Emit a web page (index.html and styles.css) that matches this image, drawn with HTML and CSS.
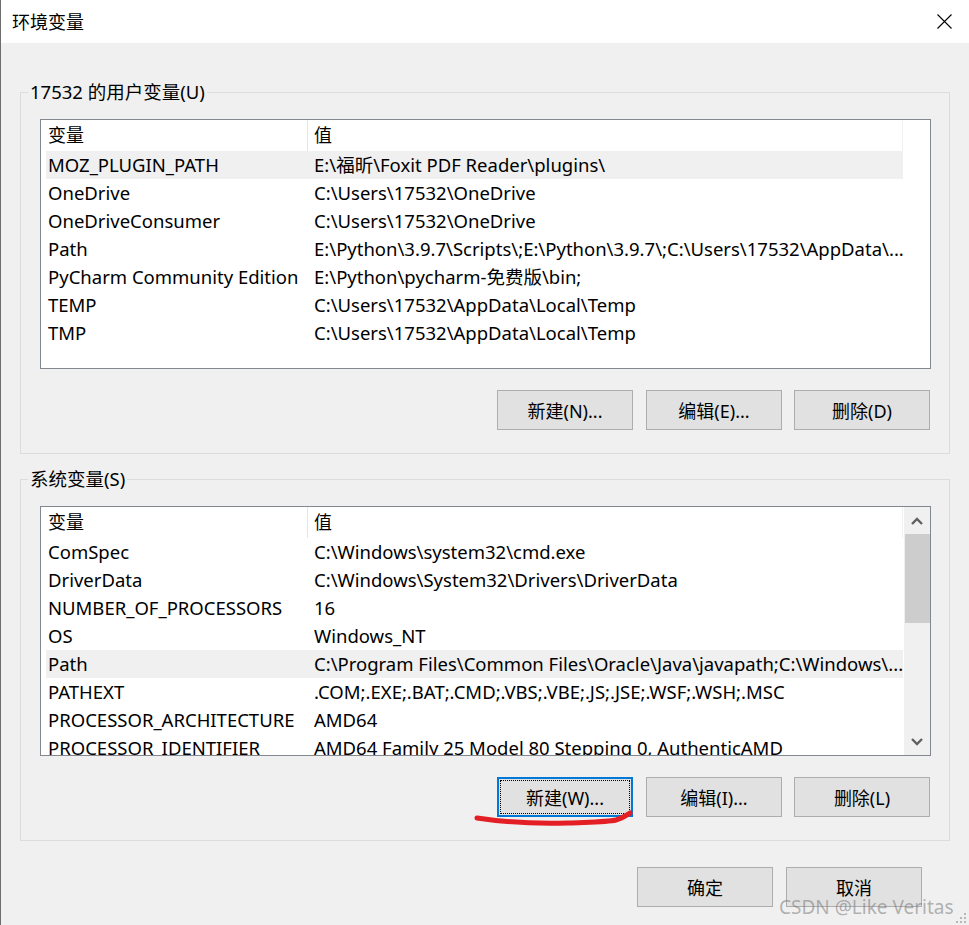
FILE: index.html
```html
<!DOCTYPE html>
<html lang="zh-CN">
<head>
<meta charset="utf-8">
<title>环境变量</title>
<link rel="stylesheet" href="styles.css">
</head>
<body>
<div class="window">
  <header class="titlebar">
    <span class="title">环境变量</span>
    <svg class="close" width="15" height="15" viewBox="0 0 15 15"><path d="M0.5 0.5 L14.5 14.5 M14.5 0.5 L0.5 14.5" stroke="#000" stroke-width="1.1" fill="none"/></svg>
  </header>

  <fieldset class="group group-user">
    <legend>17532 的用户变量(U)</legend>
    <div class="list">
      <div class="list-body">
        <div class="row head"><div class="c1">变量</div><div class="c2">值</div></div>
        <div class="row sel"><div class="c1">MOZ_PLUGIN_PATH</div><div class="c2">E:\福昕\Foxit PDF Reader\plugins\</div></div>
        <div class="row"><div class="c1">OneDrive</div><div class="c2">C:\Users\17532\OneDrive</div></div>
        <div class="row"><div class="c1">OneDriveConsumer</div><div class="c2">C:\Users\17532\OneDrive</div></div>
        <div class="row"><div class="c1">Path</div><div class="c2">E:\Python\3.9.7\Scripts\;E:\Python\3.9.7\;C:\Users\17532\AppData\...</div></div>
        <div class="row"><div class="c1">PyCharm Community Edition</div><div class="c2">E:\Python\pycharm-免费版\bin;</div></div>
        <div class="row"><div class="c1">TEMP</div><div class="c2">C:\Users\17532\AppData\Local\Temp</div></div>
        <div class="row"><div class="c1">TMP</div><div class="c2">C:\Users\17532\AppData\Local\Temp</div></div>
      </div>
    </div>
    <div class="btns">
      <button class="btn">新建(N)...</button>
      <button class="btn">编辑(E)...</button>
      <button class="btn">删除(D)</button>
    </div>
  </fieldset>

  <fieldset class="group group-sys">
    <legend>系统变量(S)</legend>
    <div class="list">
      <div class="list-body">
        <div class="row head"><div class="c1">变量</div><div class="c2">值</div></div>
        <div class="row"><div class="c1">ComSpec</div><div class="c2">C:\Windows\system32\cmd.exe</div></div>
        <div class="row"><div class="c1">DriverData</div><div class="c2">C:\Windows\System32\Drivers\DriverData</div></div>
        <div class="row"><div class="c1">NUMBER_OF_PROCESSORS</div><div class="c2">16</div></div>
        <div class="row"><div class="c1">OS</div><div class="c2">Windows_NT</div></div>
        <div class="row sel"><div class="c1">Path</div><div class="c2">C:\Program Files\Common Files\Oracle\Java\javapath;C:\Windows\...</div></div>
        <div class="row"><div class="c1">PATHEXT</div><div class="c2">.COM;.EXE;.BAT;.CMD;.VBS;.VBE;.JS;.JSE;.WSF;.WSH;.MSC</div></div>
        <div class="row"><div class="c1">PROCESSOR_ARCHITECTURE</div><div class="c2">AMD64</div></div>
        <div class="row"><div class="c1">PROCESSOR_IDENTIFIER</div><div class="c2">AMD64 Family 25 Model 80 Stepping 0, AuthenticAMD</div></div>
      </div>
      <div class="scrollbar">
        <div class="sb-btn"><svg width="12" height="8" viewBox="0 0 12 8"><path d="M1 7 L6 2 L11 7" stroke="#606060" stroke-width="2.4" fill="none"/></svg></div>
        <div class="sb-track"><div class="sb-thumb"></div></div>
        <div class="sb-btn"><svg width="12" height="8" viewBox="0 0 12 8"><path d="M1 1 L6 6 L11 1" stroke="#606060" stroke-width="2.4" fill="none"/></svg></div>
      </div>
    </div>
    <div class="btns">
      <button class="btn focus"><span class="focus-ring">新建(W)...</span></button>
      <button class="btn">编辑(I)...</button>
      <button class="btn">删除(L)</button>
    </div>
  </fieldset>

  <div class="footer">
    <button class="btn">确定</button>
    <button class="btn">取消</button>
  </div>

  <svg class="scribble" width="170" height="24" viewBox="0 0 170 24"><path d="M4 10 C30 14 60 16 95 15 C120 14 135 14 143 12 C150 10 154 7 157 5" stroke="#e31e24" stroke-width="5" stroke-linecap="round" fill="none"/></svg>
  <div class="watermark">CSDN @Like Veritas</div>
  <svg class="grip" width="12" height="12" viewBox="0 0 12 12"><g fill="#b8b8b8"><rect x="9" y="1" width="2" height="2"/><rect x="5" y="5" width="2" height="2"/><rect x="9" y="5" width="2" height="2"/><rect x="1" y="9" width="2" height="2"/><rect x="5" y="9" width="2" height="2"/><rect x="9" y="9" width="2" height="2"/></g></svg>
</div>
</body>
</html>
```

FILE: styles.css
```css
* { box-sizing: border-box; }
html, body { margin: 0; padding: 0; }
body {
  font-family: "Noto Sans", "Noto Sans CJK SC", sans-serif;
  font-size: 18px;
  color: #000;
  background: #f0f0f0;
}
.window {
  position: relative;
  width: 969px;
  height: 925px;
  overflow: hidden;
  background: #f0f0f0;
  border-left: 1px solid #6d6d6d;
}
.titlebar {
  height: 43px;
  background: #fff;
  display: flex;
  align-items: center;
  justify-content: space-between;
  padding: 0 17px 0 11px;
}
.title { font-size: 18px; line-height: 24px; }
.close { display: block; }

.group {
  margin: 0 19px 0 19px;
  border: 1px solid #dcdcdc;
  padding: 15px 18px 23px 19px;
  min-width: 0;
}
.group-user { margin-top: 37px; }
.group-sys { margin-top: 13px; }
.group legend {
  padding: 0 2px;
  margin-left: -12px;
  line-height: 24px;
  font-size: 18.5px;
}

.list {
  height: 250px;
  border: 1px solid #828790;
  background: #fff;
  display: flex;
  overflow: hidden;
}
.list-body {
  flex: 1;
  overflow: hidden;
  min-width: 0;
}
.row {
  display: grid;
  grid-template-columns: 262px 595px;
  margin-left: 5px;
  width: 857px;
  height: 28px;
  line-height: 28px;
  font-size: 18.5px;
  white-space: nowrap;
}
.row .c1 { padding-left: 2px; overflow: hidden; }
.row .c2 { padding-left: 6px; overflow: hidden; }
.row.sel { background: #f0f0f0; }
.row.head { height: 31px; line-height: 31px; font-size: 18px; }
.row.head .c1 { border-right: 1px solid #e5e5e5; }
.row.head .c2 { border-right: 1px solid #f0f0f0; }

.scrollbar {
  width: 26px;
  background: #f0f0f0;
  display: flex;
  flex-direction: column;
}
.sb-btn {
  height: 27px;
  display: flex;
  align-items: center;
  justify-content: center;
}
.sb-track { flex: 1; padding-left: 1px; }
.sb-thumb { height: 89px; background: #cdcdcd; }

.btns {
  display: flex;
  justify-content: flex-end;
  gap: 12px;
  margin-top: 21px;
  margin-right: 1px;
}
.btns .btn:first-child { margin-right: 1px; }
.btn {
  width: 136px;
  height: 40px;
  background: #e1e1e1;
  border: 1px solid #adadad;
  font-family: "Noto Sans", "Noto Sans CJK SC", sans-serif;
  font-size: 18px;
  color: #000;
  padding: 0;
  display: flex;
  align-items: center;
  justify-content: center;
}
.btn.focus {
  border: 1px solid #0078d7;
  box-shadow: inset 0 0 0 1px #0078d7;
  padding: 2px;
}
.focus-ring {
  width: 100%;
  height: 100%;
  display: flex;
  align-items: center;
  justify-content: center;
  border: 1px dotted #000;
}

.footer {
  display: flex;
  justify-content: flex-end;
  gap: 13px;
  margin: 26px 47px 0 0;
}

.scribble {
  position: absolute;
  left: 472px;
  top: 808px;
}
.watermark {
  position: absolute;
  left: 778px;
  top: 893px;
  font-family: "Noto Sans", sans-serif;
  font-size: 19px;
  line-height: 28px;
  color: rgba(120, 120, 120, 0.55);
}
.grip {
  position: absolute;
  right: 2px;
  bottom: 1px;
}
```
